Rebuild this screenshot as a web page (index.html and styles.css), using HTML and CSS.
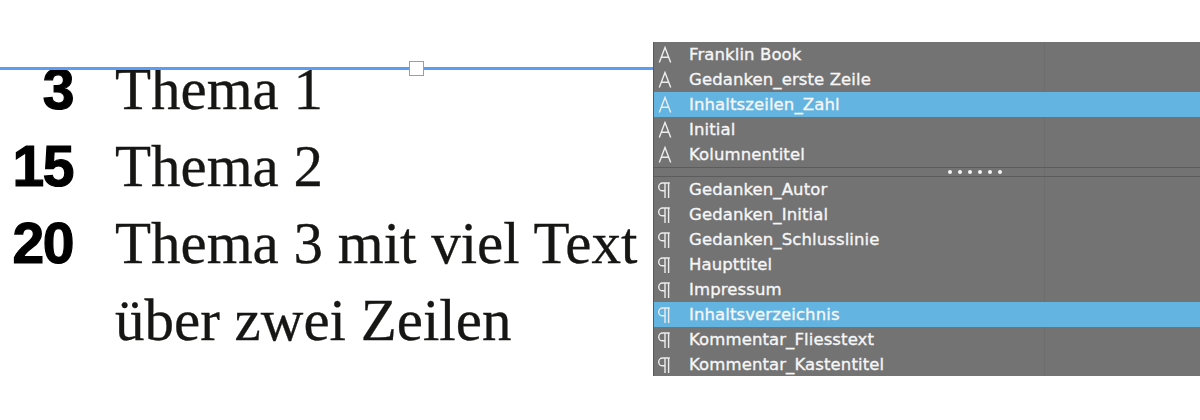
FILE: index.html
```html
<!DOCTYPE html>
<html lang="de">
<head>
<meta charset="utf-8">
<title>Inhaltsverzeichnis</title>
<link rel="stylesheet" href="styles.css">
</head>
<body>
<div class="page">
  <div class="toc">
    <div class="num">3</div><div class="entry">Thema 1</div>
    <div class="num">15</div><div class="entry">Thema 2</div>
    <div class="num">20</div><div class="entry">Thema 3 mit viel Text<br>über zwei Zeilen</div>
  </div>

  <div class="frame-line"><span class="handle"></span></div>

  <div class="panel">
    <div class="col-line"></div>
    <div class="group">
      <div class="row"><span class="ico"><svg viewBox="0 0 16 18" width="16" height="18"><path d="M2.3 16.5 L8 1.5 L13.7 16.5 M4.3 11.2 H11.7" fill="none" stroke="#ededed" stroke-width="1.4"/></svg></span><span class="label">Franklin Book</span></div>
      <div class="row"><span class="ico"><svg viewBox="0 0 16 18" width="16" height="18"><path d="M2.3 16.5 L8 1.5 L13.7 16.5 M4.3 11.2 H11.7" fill="none" stroke="#ededed" stroke-width="1.4"/></svg></span><span class="label">Gedanken_erste Zeile</span></div>
      <div class="row sel"><span class="ico"><svg viewBox="0 0 16 18" width="16" height="18"><path d="M2.3 16.5 L8 1.5 L13.7 16.5 M4.3 11.2 H11.7" fill="none" stroke="#ededed" stroke-width="1.4"/></svg></span><span class="label">Inhaltszeilen_Zahl</span></div>
      <div class="row"><span class="ico"><svg viewBox="0 0 16 18" width="16" height="18"><path d="M2.3 16.5 L8 1.5 L13.7 16.5 M4.3 11.2 H11.7" fill="none" stroke="#ededed" stroke-width="1.4"/></svg></span><span class="label">Initial</span></div>
      <div class="row"><span class="ico"><svg viewBox="0 0 16 18" width="16" height="18"><path d="M2.3 16.5 L8 1.5 L13.7 16.5 M4.3 11.2 H11.7" fill="none" stroke="#ededed" stroke-width="1.4"/></svg></span><span class="label">Kolumnentitel</span></div>
    </div>
    <div class="divider">
      <div class="dots"><i></i><i></i><i></i><i></i><i></i><i></i></div>
    </div>
    <div class="group">
      <div class="row"><span class="ico"><svg viewBox="0 0 16 18" width="16" height="18"><path d="M8 2 H5.6 A3.9 3.9 0 0 0 5.6 9.8 H8 Z M8 2 V17 M11.6 2 V17 M8 2 H12.8" fill="none" stroke="#ededed" stroke-width="1.4"/></svg></span><span class="label">Gedanken_Autor</span></div>
      <div class="row"><span class="ico"><svg viewBox="0 0 16 18" width="16" height="18"><path d="M8 2 H5.6 A3.9 3.9 0 0 0 5.6 9.8 H8 Z M8 2 V17 M11.6 2 V17 M8 2 H12.8" fill="none" stroke="#ededed" stroke-width="1.4"/></svg></span><span class="label">Gedanken_Initial</span></div>
      <div class="row"><span class="ico"><svg viewBox="0 0 16 18" width="16" height="18"><path d="M8 2 H5.6 A3.9 3.9 0 0 0 5.6 9.8 H8 Z M8 2 V17 M11.6 2 V17 M8 2 H12.8" fill="none" stroke="#ededed" stroke-width="1.4"/></svg></span><span class="label">Gedanken_Schlusslinie</span></div>
      <div class="row"><span class="ico"><svg viewBox="0 0 16 18" width="16" height="18"><path d="M8 2 H5.6 A3.9 3.9 0 0 0 5.6 9.8 H8 Z M8 2 V17 M11.6 2 V17 M8 2 H12.8" fill="none" stroke="#ededed" stroke-width="1.4"/></svg></span><span class="label">Haupttitel</span></div>
      <div class="row"><span class="ico"><svg viewBox="0 0 16 18" width="16" height="18"><path d="M8 2 H5.6 A3.9 3.9 0 0 0 5.6 9.8 H8 Z M8 2 V17 M11.6 2 V17 M8 2 H12.8" fill="none" stroke="#ededed" stroke-width="1.4"/></svg></span><span class="label">Impressum</span></div>
      <div class="row sel"><span class="ico"><svg viewBox="0 0 16 18" width="16" height="18"><path d="M8 2 H5.6 A3.9 3.9 0 0 0 5.6 9.8 H8 Z M8 2 V17 M11.6 2 V17 M8 2 H12.8" fill="none" stroke="#ededed" stroke-width="1.4"/></svg></span><span class="label">Inhaltsverzeichnis</span></div>
      <div class="row"><span class="ico"><svg viewBox="0 0 16 18" width="16" height="18"><path d="M8 2 H5.6 A3.9 3.9 0 0 0 5.6 9.8 H8 Z M8 2 V17 M11.6 2 V17 M8 2 H12.8" fill="none" stroke="#ededed" stroke-width="1.4"/></svg></span><span class="label">Kommentar_Fliesstext</span></div>
      <div class="row"><span class="ico"><svg viewBox="0 0 16 18" width="16" height="18"><path d="M8 2 H5.6 A3.9 3.9 0 0 0 5.6 9.8 H8 Z M8 2 V17 M11.6 2 V17 M8 2 H12.8" fill="none" stroke="#ededed" stroke-width="1.4"/></svg></span><span class="label">Kommentar_Kastentitel</span></div>
    </div>
  </div>
</div>
</body>
</html>
```

FILE: styles.css
```css
* { box-sizing: border-box; }
html, body { margin: 0; padding: 0; background: #ffffff; }
.page {
  position: relative;
  width: 1200px;
  height: 420px;
  overflow: hidden;
}
.toc {
  display: grid;
  grid-template-columns: 73px auto;
  column-gap: 42px;
  padding-top: 51px;
  color: #161614;
}
.num {
  font-family: "Liberation Sans", Arial, sans-serif;
  font-weight: bold;
  font-size: 57px;
  line-height: 77px;
  text-align: right;
  color: #000;
  letter-spacing: -1.5px;
  -webkit-text-stroke: 1.2px #000;
}
.entry {
  font-family: "Liberation Serif", "Times New Roman", serif;
  font-size: 59px;
  line-height: 77px;
  -webkit-text-stroke: 0.3px #161614;
}
.frame-line {
  position: absolute;
  left: 0;
  top: 67px;
  width: 660px;
  height: 3px;
  background: #5c9cf5;
}
.handle {
  position: absolute;
  left: 409px;
  top: -6px;
  width: 15px;
  height: 15px;
  background: #fff;
  border: 1.5px solid #6ea6f4;
}
.panel {
  position: absolute;
  left: 653px;
  top: 42px;
  width: 547px;
  height: 334px;
  background: #737373;
  border-left: 1px solid #5a5a5a;
  font-family: "DejaVu Sans", Verdana, sans-serif;
  font-size: 16.5px;
  color: #f6f6f6;
}
.col-line {
  position: absolute;
  left: 390px;
  top: 0;
  bottom: 0;
  width: 1px;
  background: rgba(0,0,0,0.05);
}
.group { display: flex; flex-direction: column; }
.row {
  height: 25px;
  display: flex;
  align-items: center;
  padding-left: 3px;
  position: relative;
}
.row.sel { background: #63b4e1; }
.ico {
  width: 16px;
  height: 18px;
  display: flex;
  margin-right: 16px;
}
.label {
  white-space: nowrap;
  letter-spacing: 0.1px;
  -webkit-text-stroke: 0.35px #f6f6f6;
}
.divider {
  height: 10px;
  border-top: 1.5px solid #5c5c5c;
  border-bottom: 1.5px solid #5c5c5c;
  display: flex;
  align-items: center;
  padding-left: 294px;
  position: relative;
}
.dots { display: flex; gap: 6px; }
.dots i {
  display: block;
  width: 4px;
  height: 4px;
  border-radius: 50%;
  background: #f4f4f4;
}
```
